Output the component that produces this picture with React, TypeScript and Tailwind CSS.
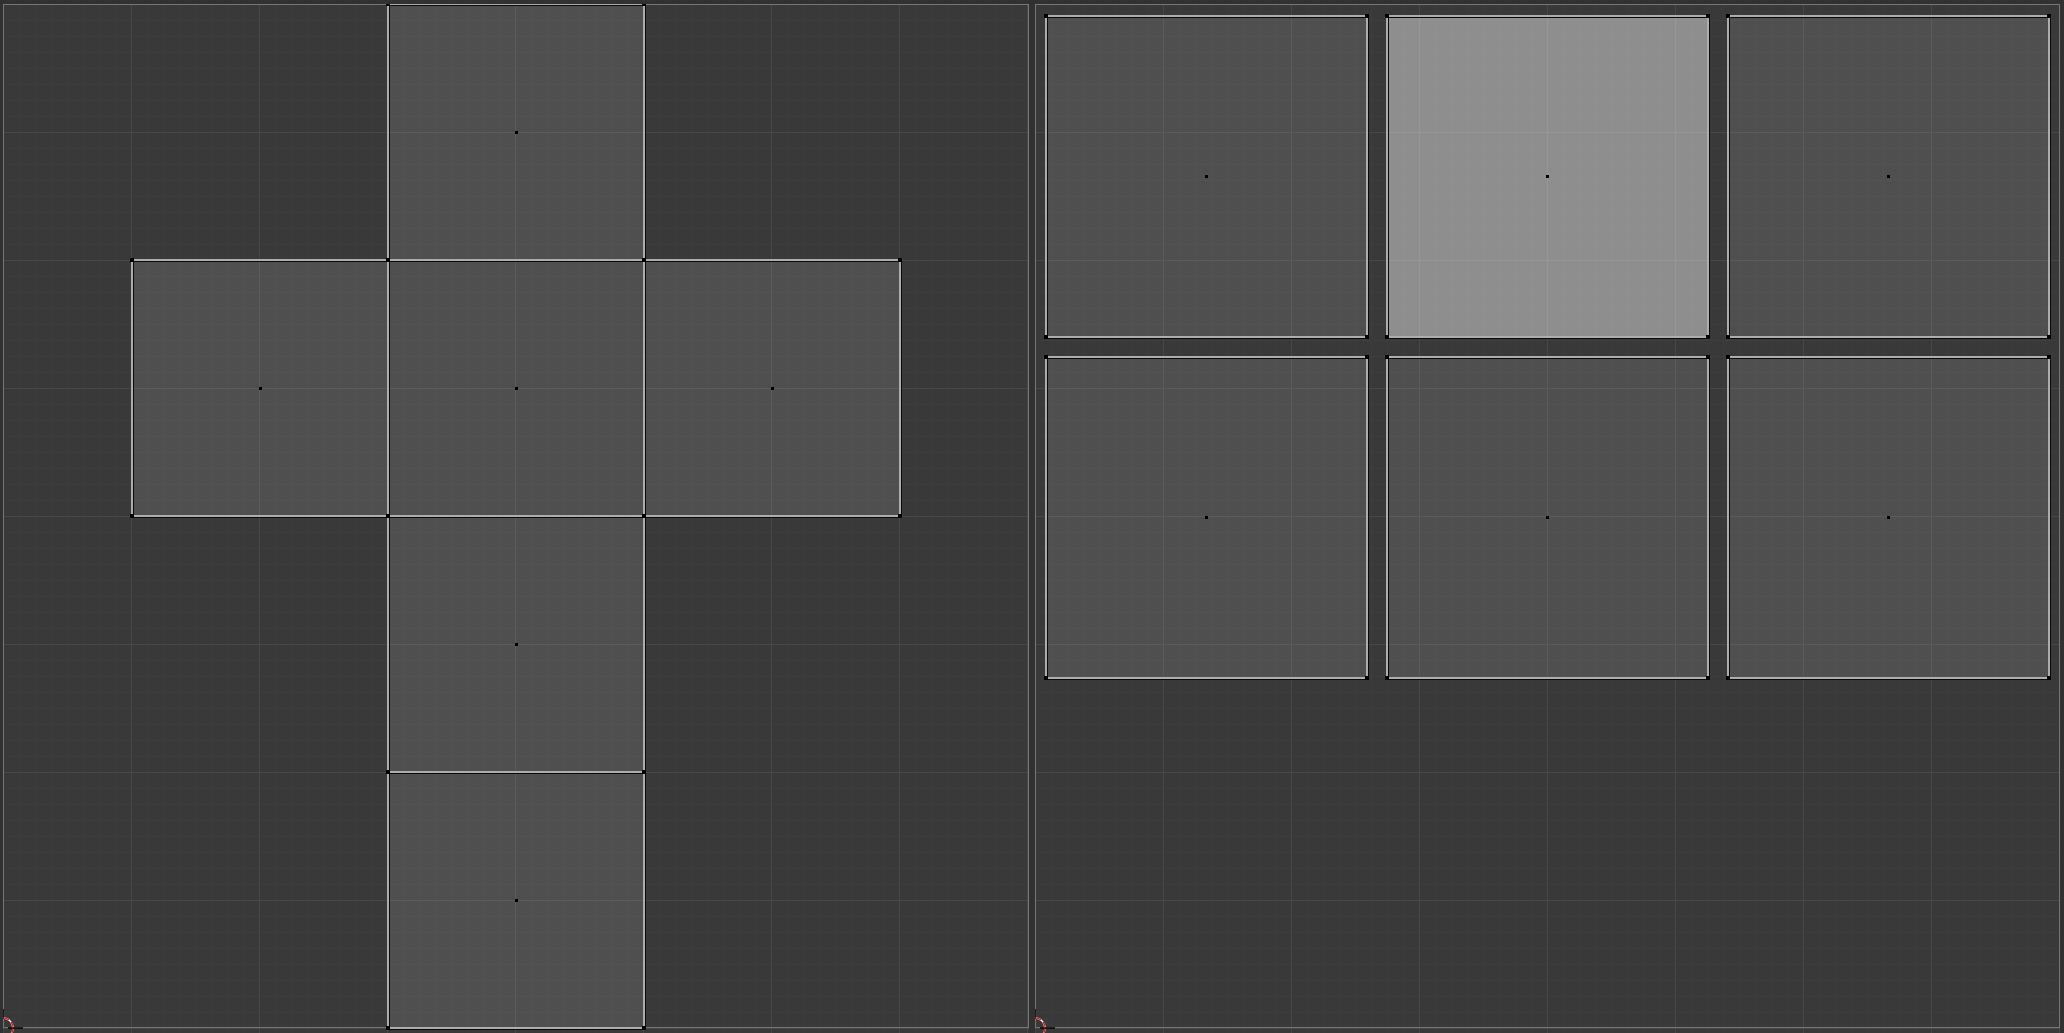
import React from 'react';

// UV editor grid backdrop: major lines every 128px, minor every 16px
const gridBg =
  'bg-[#393939] bg-[linear-gradient(to_right,#474747_1px,transparent_1px),linear-gradient(to_bottom,#474747_1px,transparent_1px),linear-gradient(to_right,#3d3d3d_1px,transparent_1px),linear-gradient(to_bottom,#3d3d3d_1px,transparent_1px)] bg-[size:128px_128px,128px_128px,16px_16px,16px_16px]';

const leftFaces = [
  'col-start-4 col-span-2 row-start-1',
  'col-start-2 col-span-2 row-start-2',
  'col-start-4 col-span-2 row-start-2',
  'col-start-6 col-span-2 row-start-2',
  'col-start-4 col-span-2 row-start-3',
  'col-start-4 col-span-2 row-start-4',
];

const rightFaces = [
  { cls: 'col-start-1 row-start-1', selected: false },
  { cls: 'col-start-2 row-start-1', selected: true },
  { cls: 'col-start-3 row-start-1', selected: false },
  { cls: 'col-start-1 row-start-2', selected: false },
  { cls: 'col-start-2 row-start-2', selected: false },
  { cls: 'col-start-3 row-start-2', selected: false },
];

function Face({ cls, selected }: { cls: string; selected?: boolean }) {
  return (
    <div
      className={`${cls} flex items-center justify-center outline-2 -outline-offset-1 outline-[#adadad] shadow-[1px_1px_0_1px_#0a0a0a,inset_2px_2px_0_#0a0a0a] ${
        selected ? 'bg-white/[0.43]' : 'bg-white/[0.115]'
      }`}
    >
      <div className="h-[3px] w-[3px] bg-black" />
    </div>
  );
}

function Verts({ cls }: { cls: string }) {
  return (
    <div className={`${cls} relative`}>
      <div className="absolute -left-[2px] -top-[2px] h-1 w-1 bg-black" />
      <div className="absolute -right-[2px] -top-[2px] h-1 w-1 bg-black" />
      <div className="absolute -left-[2px] -bottom-[2px] h-1 w-1 bg-black" />
      <div className="absolute -right-[2px] -bottom-[2px] h-1 w-1 bg-black" />
    </div>
  );
}

function Cursor() {
  return (
    <svg
      className="pointer-events-none absolute -bottom-[25px] -left-[25px] overflow-visible"
      width="50"
      height="50"
      viewBox="0 0 50 50"
    >
      <circle cx="25" cy="25" r="10" fill="none" stroke="#ffffff" strokeWidth="1.5" />
      <circle cx="25" cy="25" r="10" fill="none" stroke="#e02020" strokeWidth="1.5" strokeDasharray="5 3" />
      <line x1="25" y1="6" x2="25" y2="16" stroke="#000" strokeWidth="1.5" />
      <line x1="30" y1="25" x2="45" y2="25" stroke="#000" strokeWidth="1.5" />
    </svg>
  );
}

export default function App() {
  return (
    <div className="flex h-[1033px] w-[2064px] gap-[6px] overflow-hidden bg-[#313131] pl-[3px] pt-[4px]">
      {/* Left editor: default cube cross unwrap */}
      <div className={`h-[1029px] w-[1026px] shrink-0 overflow-hidden ${gridBg}`}>
        <div className="relative h-[1024px] w-[1026px] shadow-[inset_0_0_0_1px_#767676]">
          <div className="ml-px grid grid-cols-[repeat(8,128px)] grid-rows-[repeat(4,256px)]">
            {leftFaces.map((c) => (
              <Face key={c} cls={c} />
            ))}
          </div>
          <div className="absolute inset-0 ml-px grid grid-cols-[repeat(8,128px)] grid-rows-[repeat(4,256px)]">
            {leftFaces.map((c) => (
              <Verts key={c} cls={c} />
            ))}
          </div>
          <Cursor />
        </div>
      </div>

      {/* Right editor: packed faces */}
      <div className={`h-[1029px] w-[1025px] shrink-0 overflow-hidden ${gridBg}`}>
        <div className="relative h-[1024px] w-[1025px] shadow-[inset_0_0_0_1px_#767676]">
          <div className="grid grid-cols-[repeat(3,321px)] grid-rows-[repeat(2,321px)] gap-[20px] pl-[11px] pt-[12px]">
            {rightFaces.map((f) => (
              <Face key={f.cls} cls={f.cls} selected={f.selected} />
            ))}
          </div>
          <div className="absolute inset-0 grid grid-cols-[repeat(3,321px)] grid-rows-[repeat(2,321px)] gap-[20px] pl-[11px] pt-[12px]">
            {rightFaces.map((f) => (
              <Verts key={f.cls} cls={f.cls} />
            ))}
          </div>
          <Cursor />
        </div>
      </div>
    </div>
  );
}
